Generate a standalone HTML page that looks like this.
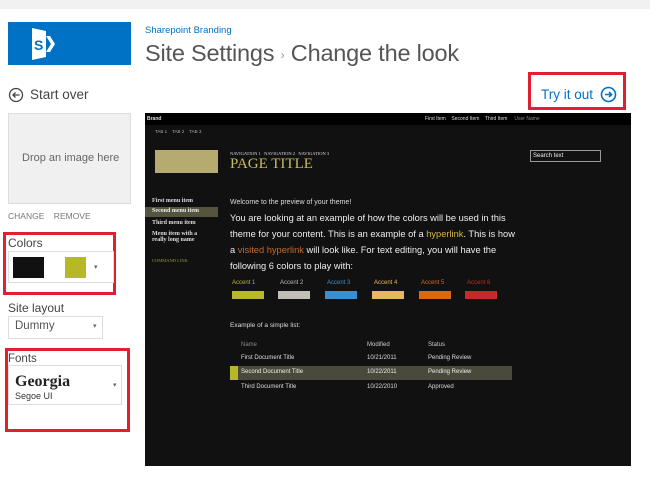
<!DOCTYPE html>
<html><head><meta charset="utf-8"><style>
*{margin:0;padding:0;box-sizing:border-box}
body{width:650px;height:495px;background:#fff;font-family:"Liberation Sans",sans-serif;position:relative;overflow:hidden;color:#444}
.a{position:absolute;white-space:nowrap}
.s{font-family:"Liberation Serif",serif}
.red{position:absolute;border:3px solid #e0202e}
</style></head><body>
<div class="a" style="left:0;top:0;width:650px;height:9px;background:#f1f1f1"></div>
<div class="a" style="left:8px;top:22px;width:123px;height:43px;background:#0072c6"></div>
<svg class="a" style="left:20px;top:26px" width="40" height="36" viewBox="0 0 40 36">
<path d="M12 2 L26 5 V31 L12 34 Z" fill="#fff"/>
<path d="M26 10 h4 l5 8 -5 8 h-4 l5 -8z" fill="#fff"/>
<text x="14" y="24" font-size="14" font-weight="bold" fill="#0072c6" font-family="Liberation Sans">S</text>
</svg>
<div class="a" style="left:145px;top:25px;font-size:9.5px;color:#0072c6">Sharepoint Branding</div>
<div class="a" style="left:145px;top:40px;font-size:23.5px;color:#555;letter-spacing:-0.2px">Site Settings <span style="font-size:12px;color:#999;vertical-align:middle">›</span> Change the look</div>
<svg class="a" style="left:8px;top:87px" width="16" height="16"><circle cx="8" cy="8" r="6.5" fill="none" stroke="#444" stroke-width="1.3"/><path d="M11.5 8H5M7.5 5.5L5 8l2.5 2.5" fill="none" stroke="#444" stroke-width="1.3"/></svg>
<div class="a" style="left:30px;top:87px;font-size:13.5px;color:#444">Start over</div>
<div class="a" style="left:8px;top:113px;width:123px;height:91px;background:#f0f0f0;border:1px solid #ddd"></div>
<div class="a" style="left:22px;top:152px;font-size:11px;color:#666">Drop an image here</div>
<div class="a" style="left:8px;top:211px;font-size:8.5px;color:#777">CHANGE &nbsp;&nbsp; REMOVE</div>
<div class="red" style="left:3px;top:232px;width:113px;height:63px"></div>
<div class="a" style="left:8px;top:236px;font-size:12px;color:#444">Colors</div>
<div class="a" style="left:8px;top:251px;width:106px;height:32px;border:1px solid #ddd;background:#fff"></div>
<div class="a" style="left:13px;top:257px;width:31px;height:21px;background:#111"></div>
<div class="a" style="left:65px;top:257px;width:21px;height:21px;background:#b6b828"></div>
<div class="a" style="left:94px;top:263px;font-size:7px;color:#666">▾</div>
<div class="a" style="left:8px;top:301px;font-size:12px;color:#444">Site layout</div>
<div class="a" style="left:8px;top:316px;width:95px;height:23px;border:1px solid #ddd"></div>
<div class="a" style="left:15px;top:320px;font-size:11.5px;color:#555">Dummy</div>
<div class="a" style="left:93px;top:322px;font-size:7px;color:#666">▾</div>
<div class="red" style="left:5px;top:348px;width:125px;height:84px"></div>
<div class="a" style="left:8px;top:353px;font-size:11.5px;color:#444">Fonts</div>
<div class="a" style="left:8px;top:365px;width:114px;height:40px;border:1px solid #ddd"></div>
<div class="a s" style="left:15px;top:373px;font-size:16px;font-weight:bold;color:#222">Georgia</div>
<div class="a" style="left:15px;top:391px;font-size:9px;color:#333">Segoe UI</div>
<div class="a" style="left:113px;top:381px;font-size:7px;color:#666">▾</div>
<div class="red" style="left:528px;top:72px;width:98px;height:38px"></div>
<div class="a" style="left:541px;top:87px;font-size:13.5px;color:#0072c6">Try it out</div>
<svg class="a" style="left:600px;top:86px" width="17" height="17"><circle cx="8.5" cy="8.5" r="7" fill="none" stroke="#0072c6" stroke-width="1.6"/><path d="M5 8.5h6.5M9 6l2.5 2.5L9 11" fill="none" stroke="#0072c6" stroke-width="1.6"/></svg>

<div class="a" style="left:145px;top:113px;width:486px;height:353px;background:#111"></div>
<div class="a" style="left:145px;top:113px;width:486px;height:12px;background:#000"></div>
<div class="a" style="left:147px;top:116px;font-size:5px;color:#ddd;font-weight:bold">Brand</div>
<div class="a" style="left:425px;top:116px;font-size:5px;color:#ddd">First Item &nbsp;&nbsp; Second Item &nbsp;&nbsp; Third Item &nbsp;&nbsp;&nbsp; <span style="color:#888">User Name</span></div>
<div class="a" style="left:155px;top:129px;font-size:4.5px;color:#aaa">TAB 1 &nbsp;&nbsp; TAB 2 &nbsp;&nbsp; TAB 3</div>
<div class="a" style="left:155px;top:150px;width:63px;height:23px;background:#b5ab6e"></div>
<div class="a s" style="left:230px;top:151px;font-size:4.5px;color:#ddd">NAVIGATION 1 &nbsp; NAVIGATION 2 &nbsp; NAVIGATION 3</div>
<div class="a s" style="left:230px;top:156px;font-size:15px;color:#c7bc5a">PAGE TITLE</div>
<div class="a" style="left:530px;top:150px;width:71px;height:12px;border:1px solid #999;font-size:6px;color:#eee;padding:2px 2px">Search text</div>
<div class="a s" style="left:152px;top:198px;font-size:6px;font-weight:bold;color:#ddd">First menu item</div>
<div class="a" style="left:145px;top:207px;width:73px;height:10px;background:#55543f"></div>
<div class="a s" style="left:152px;top:208px;font-size:6px;font-weight:bold;color:#eee">Second menu item</div>
<div class="a s" style="left:152px;top:220px;font-size:6px;font-weight:bold;color:#ddd">Third menu item</div>
<div class="a s" style="left:152px;top:231px;font-size:6px;font-weight:bold;color:#ddd;line-height:6px;white-space:normal;width:60px">Menu item with a really long name</div>
<div class="a s" style="left:152px;top:258px;font-size:4.5px;color:#9a9a40">COMMAND LINK</div>
<div class="a" style="left:230px;top:199px;font-size:7px;color:#ddd">Welcome to the preview of your theme!</div>
<div class="a" style="left:230px;top:210px;font-size:9.3px;line-height:16px;color:#eee;white-space:normal;width:290px">You are looking at an example of how the colors will be used in this theme for your content. This is an example of a <span style="color:#d9b050">hyperlink</span>. This is how a <span style="color:#c86a2a">visited hyperlink</span> will look like. For text editing, you will have the following 6 colors to play with:</div>
<div class="a" style="left:232px;top:280px;font-size:6px;color:#b6b828">Accent 1</div>
<div class="a" style="left:280px;top:280px;font-size:6px;color:#bbb">Accent 2</div>
<div class="a" style="left:327px;top:280px;font-size:6px;color:#3a8fd0">Accent 3</div>
<div class="a" style="left:374px;top:280px;font-size:6px;color:#e8b860">Accent 4</div>
<div class="a" style="left:421px;top:280px;font-size:6px;color:#d96a1a">Accent 5</div>
<div class="a" style="left:467px;top:280px;font-size:6px;color:#c42a2a">Accent 6</div>
<div class="a" style="left:232px;top:291px;width:32px;height:8px;background:#b6b828"></div>
<div class="a" style="left:278px;top:291px;width:32px;height:8px;background:#c2bfb8"></div>
<div class="a" style="left:325px;top:291px;width:32px;height:8px;background:#3a8fd0"></div>
<div class="a" style="left:372px;top:291px;width:32px;height:8px;background:#e8b860"></div>
<div class="a" style="left:419px;top:291px;width:32px;height:8px;background:#d96a12"></div>
<div class="a" style="left:465px;top:291px;width:32px;height:8px;background:#c42a2a"></div>
<div class="a" style="left:230px;top:322px;font-size:6.5px;color:#ddd">Example of a simple list:</div>
<div class="a" style="left:241px;top:342px;font-size:6px;color:#888">Name</div>
<div class="a" style="left:367px;top:342px;font-size:6px;color:#ccc">Modified</div>
<div class="a" style="left:428px;top:342px;font-size:6px;color:#ccc">Status</div>
<div class="a" style="left:241px;top:355px;font-size:6px;color:#ddd">First Document Title</div>
<div class="a" style="left:367px;top:355px;font-size:6px;color:#ddd">10/21/2011</div>
<div class="a" style="left:428px;top:355px;font-size:6px;color:#ddd">Pending Review</div>
<div class="a" style="left:230px;top:366px;width:282px;height:14px;background:#4a4a3c"></div>
<div class="a" style="left:230px;top:366px;width:8px;height:14px;background:#b6b828"></div>
<div class="a" style="left:241px;top:369px;font-size:6px;color:#eee">Second Document Title</div>
<div class="a" style="left:367px;top:369px;font-size:6px;color:#eee">10/22/2011</div>
<div class="a" style="left:428px;top:369px;font-size:6px;color:#eee">Pending Review</div>
<div class="a" style="left:241px;top:384px;font-size:6px;color:#ddd">Third Document Title</div>
<div class="a" style="left:367px;top:384px;font-size:6px;color:#ddd">10/22/2010</div>
<div class="a" style="left:428px;top:384px;font-size:6px;color:#ddd">Approved</div>
</body></html>
